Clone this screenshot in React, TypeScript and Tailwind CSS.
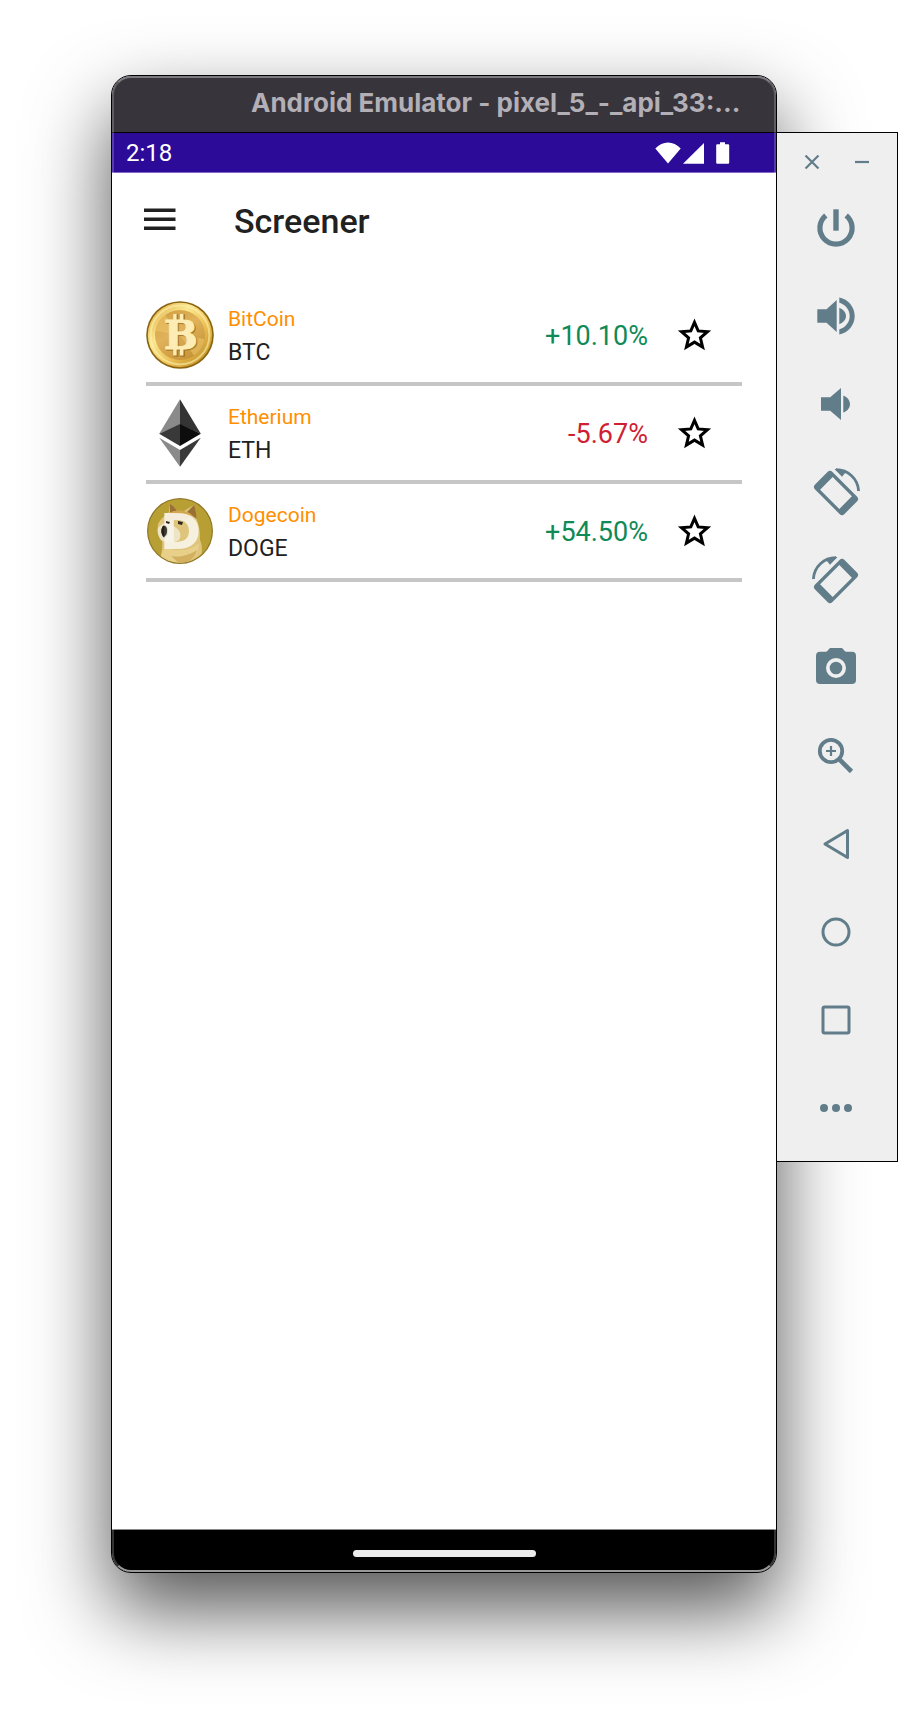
import React, { ReactNode } from "react";

function BitcoinLogo() {
  return (
    <svg viewBox="-34 -34 68 68" className="h-[68px] w-[68px]" aria-hidden="true">
      <defs>
        <linearGradient id="btcRim" x1="0" y1="0" x2="1" y2="1">
          <stop offset="0" stopColor="#d9a53a" />
          <stop offset="0.35" stopColor="#fbe78f" />
          <stop offset="0.6" stopColor="#eec45a" />
          <stop offset="1" stopColor="#b27f14" />
        </linearGradient>
        <linearGradient id="btcFace" x1="0" y1="0" x2="0.6" y2="1">
          <stop offset="0" stopColor="#cf9d40" />
          <stop offset="0.5" stopColor="#e0b25a" />
          <stop offset="1" stopColor="#c8953a" />
        </linearGradient>
      </defs>
      <circle r="33.8" fill="#8a6410" />
      <circle r="32.2" fill="url(#btcRim)" />
      <circle r="29.4" fill="none" stroke="#fdf0ac" strokeWidth="2" opacity="0.6" />
      <circle r="25" fill="url(#btcFace)" />
      <path d="M0 0 L-24.5 -4 A25 25 0 0 1 -15 -20 Z M0 0 L24.5 4 A25 25 0 0 1 14 20.6 Z" fill="#edc468" opacity="0.6" />
      <g fill="#94691c" stroke="#94691c" strokeWidth="1.4" opacity="0.7">
        <text x="1.8" y="15.2" fontFamily="DejaVu Serif" fontWeight="700" fontSize="40" textAnchor="middle">B</text>
        <path d="M-5.8 -20h3.4v7h-3.4z M1 -20h3.4v7h-3.4z M-5.8 14h3.4v7h-3.4z M1 14h3.4v7h-3.4z" />
      </g>
      <g fill="#fdedb4" stroke="#fdedb4" strokeWidth="1">
        <text x="0.8" y="14.2" fontFamily="DejaVu Serif" fontWeight="700" fontSize="40" textAnchor="middle">B</text>
        <path strokeWidth="0" d="M-6.8 -21h3.4v7h-3.4z M0 -21h3.4v7h-3.4z M-6.8 13.5h3.4v7h-3.4z M0 13.5h3.4v7h-3.4z" />
      </g>
    </svg>
  );
}

function EthereumLogo() {
  return (
    <svg viewBox="-34 -34 68 68" className="h-[68px] w-[68px]" aria-hidden="true">
      <path d="M0 -33.7V-8.5L-20.8 0.7Z" fill="#8a8a8a" />
      <path d="M0 -33.7V-8.5L20.8 0.7Z" fill="#343434" />
      <path d="M0 -8.9V13L-20.8 0.7Z" fill="#393939" />
      <path d="M0 -8.9V13L20.8 0.7Z" fill="#0d0d0d" />
      <path d="M-20.8 4.7L0 17V33.7Z" fill="#8a8a8a" />
      <path d="M20.8 4.7L0 17V33.7Z" fill="#393939" />
    </svg>
  );
}

function DogecoinLogo() {
  return (
    <svg viewBox="-34 -34 68 68" className="h-[68px] w-[68px]" aria-hidden="true">
      <defs>
        <clipPath id="dogeClip"><circle r="31.6" /></clipPath>
      </defs>
      <circle r="33" fill="#8f7526" />
      <circle r="31.8" fill="#b89f33" />
      <g clipPath="url(#dogeClip)">
        <path d="M-22 -7C-19 -13 -14 -16 -11 -19L-10 -27C-7 -26 -5 -23 -3 -20L4 -20L14 -26C16 -22 16 -16 17 -11C20 -3 20 4 20 9C23 15 22 24 20 32H-21C-19 25 -17 17 -18 10C-22 6 -23 0 -22 -7Z" fill="#dfc57b" />
        <path d="M-10 -27C-7 -26 -5 -23 -3 -20L-10 -17Z M14 -26C16 -22 16 -16 17 -12L7 -19Z" fill="#9b7133" />
        <path d="M-11 -18C-4 -22 7 -21 12 -16L7 -12L-8 -11L-17 -7Z" fill="#d3a650" />
        <path d="M-22 -3C-17 -9 -11 -10 -7 -5C0 -2 2 4 -1 9C-7 13 -14 12 -19 9C-22 5 -23 0 -22 -3Z" fill="#eee4c8" />
        <path d="M-14 16C-5 21 10 21 19 12C19 21 14 29 4 34H-21C-20 27 -18 20 -14 16Z" fill="#e8d08a" />
        <path d="M-9 25C1 27 11 23 17 19C15 27 8 33 0 33Z" fill="#d2b060" />
        <path d="M-17 -5C-13.5 -6 -11.5 -3 -12 1C-12 4 -14 7 -16 6.5C-19 4 -19.5 -2 -17 -5Z" fill="#242018" />
      </g>
      <text x="0.5" y="18.2" fill="#f8f4ea" fillOpacity="0.9" fontFamily="DejaVu Sans" fontWeight="700" fontSize="50" textAnchor="middle">D</text>
      <path d="M-17 -5C-14 -6 -12.5 -3 -13 0.5C-13 3 -14.5 5.5 -16 5.5C-19 4 -19.5 -2 -17 -5Z" fill="#242018" fillOpacity="0.85" />
      <path d="M-14 -10l4 1-1 2-3-1z M-2 -10l5 1-1 3-4-1z" fill="#31291c" />
    </svg>
  );
}

type Coin = { name: string; symbol: string; change: string; up: boolean; logo: ReactNode };

const coins: Coin[] = [
  { name: "BitCoin", symbol: "BTC", change: "+10.10%", up: true, logo: <BitcoinLogo /> },
  { name: "Etherium", symbol: "ETH", change: "-5.67%", up: false, logo: <EthereumLogo /> },
  { name: "Dogecoin", symbol: "DOGE", change: "+54.50%", up: true, logo: <DogecoinLogo /> },
];

function CoinRow({ coin }: { coin: Coin }) {
  return (
    <li className="flex h-[98px] items-center border-b-4 border-[#c6c6c6]">
      {coin.logo}
      <div className="ml-3.5 flex-1 pt-0.5">
        <div className="text-[21px] leading-[34px] text-[#ff8f00]">{coin.name}</div>
        <div className="text-[23px] leading-[34px] text-[#212121]">{coin.symbol}</div>
      </div>
      <span className={coin.up ? "pt-0.5 text-[27px] leading-8 text-[#0f8a57]" : "pt-0.5 text-[27px] leading-8 text-[#cf1f33]"}>
        {coin.change}
      </span>
      <button type="button" aria-label={`Add ${coin.name} to favourites`} className="mr-7 ml-[26px] flex h-10 w-10 items-center justify-center">
        <svg viewBox="0 0 40 40" className="h-10 w-10" fill="none" stroke="#000" strokeWidth="3" aria-hidden="true">
          <path d="M20.5 7.3L24.2 15.9L33.5 16.7L26.4 22.9L28.6 32L20.5 27.1L12.4 32L14.6 22.9L7.5 16.7L16.8 15.9Z" />
        </svg>
      </button>
    </li>
  );
}

const rotateIcon = (
  <>
    <path
      transform="translate(0 1) rotate(45)"
      fillRule="evenodd"
      d="M-17.3 -12.3H17.3A3.5 3.5 0 0 1 20.8 -8.8V8.8A3.5 3.5 0 0 1 17.3 12.3H-17.3A3.5 3.5 0 0 1 -20.8 8.8V-8.8A3.5 3.5 0 0 1 -17.3 -12.3ZM-13.6 -8.9V8.9H13.6V-8.9Z"
    />
    <path d="M0 -22.3A22.4 22.4 0 0 1 22.6 -1" fill="none" stroke="currentColor" strokeWidth="2.8" />
    <path d="M-1.5 -23L6 -15.3L9.5 -19.5L5 -23Z" />
  </>
);

const tools: { label: string; icon: ReactNode }[] = [
  {
    label: "Power",
    icon: (
      <>
        <path d="M-2.7 -18.7h5.4v21.4h-5.4z" />
        <path d="M-10.2 -12.5A16.1 16.1 0 1 0 10.2 -12.5" fill="none" stroke="currentColor" strokeWidth="5.2" />
      </>
    ),
  },
  {
    label: "Volume up",
    icon: <path d="M-18.7 -6.7H-9.5L0.7 -16V16L-9.5 6.7H-18.7Z M3.3 -8.2C7.5 -6.5 10 -3.5 10 0S7.5 6.5 3.3 8.2Z M3.3 -18.5C12.3 -16.8 18.7 -9 18.7 0S12.3 16.8 3.3 18.5V13.3C9.5 11.6 13.7 6.3 13.7 0S9.5 -11.6 3.3 -13.3Z" />,
  },
  {
    label: "Volume down",
    icon: <path d="M-15 -6.7H-5.8L5 -16V16L-5.8 6.7H-15Z M7.3 -8.6C11.5 -7 14 -3.7 14 0S11.5 7 7.3 8.6Z" />,
  },
  { label: "Rotate left", icon: rotateIcon },
  { label: "Rotate right", icon: <g transform="scale(-1 1)">{rotateIcon}</g> },
  {
    label: "Take screenshot",
    icon: (
      <path
        fillRule="evenodd"
        d="M-16 -16.3H-9.5L-6 -20H6L9.5 -16.3H16A4 4 0 0 1 20 -12.3V12A4 4 0 0 1 16 16H-16A4 4 0 0 1 -20 12V-12.3A4 4 0 0 1 -16 -16.3ZM0 -10A10 10 0 1 0 0 10A10 10 0 1 0 0 -10ZM0 -6.3A6.3 6.3 0 1 1 0 6.3A6.3 6.3 0 1 1 0 -6.3Z"
      />
    ),
  },
  {
    label: "Zoom",
    icon: (
      <g fill="none" stroke="currentColor">
        <circle cx="-5" cy="-5" r="11.2" strokeWidth="3.8" />
        <path d="M-10 -5H0M-5 -10V0" strokeWidth="2.2" />
        <path d="M3.6 3.6L15.5 15.5" strokeWidth="4.6" />
      </g>
    ),
  },
  { label: "Back", icon: <path d="M-11 0L11.5 -13.5V13.5Z" fill="none" stroke="currentColor" strokeWidth="3" strokeLinejoin="round" /> },
  { label: "Home", icon: <circle r="13" fill="none" stroke="currentColor" strokeWidth="3" /> },
  { label: "Overview", icon: <rect x="-13" y="-13" width="26" height="26" rx="1.5" fill="none" stroke="currentColor" strokeWidth="3" /> },
  {
    label: "More",
    icon: (
      <>
        <circle cx="-12" r="4" />
        <circle r="4" />
        <circle cx="12" r="4" />
      </>
    ),
  },
];

function Toolbar() {
  return (
    <aside className="relative mt-[57px] flex w-[121px] shrink-0 flex-col border-y border-r border-black bg-[#efefef] pb-[9px] text-[#617d8a]">
      <div className="flex h-[51px] items-center justify-center gap-[26px] pt-1.5">
        <button type="button" aria-label="Close" className="flex h-6 w-6 items-center justify-center">
          <svg viewBox="0 0 24 24" className="h-6 w-6" stroke="currentColor" strokeWidth="2.2" aria-hidden="true">
            <path d="M5.5 5.5L18.5 18.5M18.5 5.5L5.5 18.5" />
          </svg>
        </button>
        <button type="button" aria-label="Minimize" className="flex h-6 w-6 items-center justify-center">
          <svg viewBox="0 0 24 24" className="h-6 w-6" stroke="currentColor" strokeWidth="2.2" aria-hidden="true">
            <path d="M5 12H19" />
          </svg>
        </button>
      </div>
      {tools.map((tool) => (
        <button key={tool.label} type="button" aria-label={tool.label} className="flex h-[88px] items-center justify-center">
          <svg viewBox="-25 -26 52 52" className="h-[52px] w-[52px]" fill="currentColor" aria-hidden="true">
            {tool.icon}
          </svg>
        </button>
      ))}
    </aside>
  );
}

function StatusBar() {
  return (
    <div className="flex h-10 items-center justify-between border-b border-[#8467c8] bg-[#2b0b98] pr-[46px] pl-3.5 text-white">
      <span className="text-[24px] leading-8">2:18</span>
      <svg viewBox="0 0 76 24" className="h-6 w-[76px]" fill="#fff" aria-hidden="true">
        <path d="M14 22.5L1.3 7.6C8.5 -0.4 19.5 -0.4 26.7 7.6Z" />
        <path d="M50 2V22.7H29Z" />
        <path d="M66 1.3H71V3.3H74.2A1 1 0 0 1 75.2 4.3V21.7A1 1 0 0 1 74.2 22.7H63.2A1 1 0 0 1 62.2 21.7V4.3A1 1 0 0 1 63.2 3.3H66Z" />
      </svg>
    </div>
  );
}

export default function App() {
  return (
    <div className="flex min-h-screen items-start overflow-hidden bg-white pt-[75px] pb-[147px] pl-[111px] font-['Roboto',sans-serif]">
      <main className="relative flex min-h-[calc(100vh-222px)] min-w-0 flex-1 flex-col overflow-hidden rounded-[20px] border border-black bg-white shadow-[0_36px_80px_rgba(0,0,0,0.68)]">
        <header className="h-[57px] border-b border-black bg-[#38343b] pr-6 pl-[139px] font-['Inter',sans-serif]">
          <h1 className="truncate text-[26px] leading-[54px] font-bold text-[#b3afb6]">Android Emulator - pixel_5_-_api_33:...</h1>
        </header>
        <StatusBar />
        <div className="flex h-[95px] items-center pl-8">
          <button type="button" aria-label="Open menu" className="flex h-8 w-8 items-center justify-center">
            <svg viewBox="0 0 32 32" className="h-8 w-8" fill="#212121" aria-hidden="true">
              <path d="M0 3.5h31.5v3.5H0zM0 12.5h31.5v3.5H0zM0 21.5h31.5v3.5H0z" />
            </svg>
          </button>
          <h2 className="pl-[58px] text-[34px] leading-10 font-medium text-[#212121]">Screener</h2>
        </div>
        <ul className="mx-[34px] mt-5 flex-1">
          {coins.map((coin) => (
            <CoinRow key={coin.symbol} coin={coin} />
          ))}
        </ul>
        <footer className="flex h-[43px] items-center justify-center border-t border-[#888888] bg-black pt-1">
          <div className="h-[7px] w-[183px] rounded-full bg-[#ebebeb]" />
        </footer>
        <div className="pointer-events-none absolute inset-0 rounded-[19px] border-2 border-white/20 border-t-white/35 border-b-white/60" />
      </main>
      <Toolbar />
    </div>
  );
}
